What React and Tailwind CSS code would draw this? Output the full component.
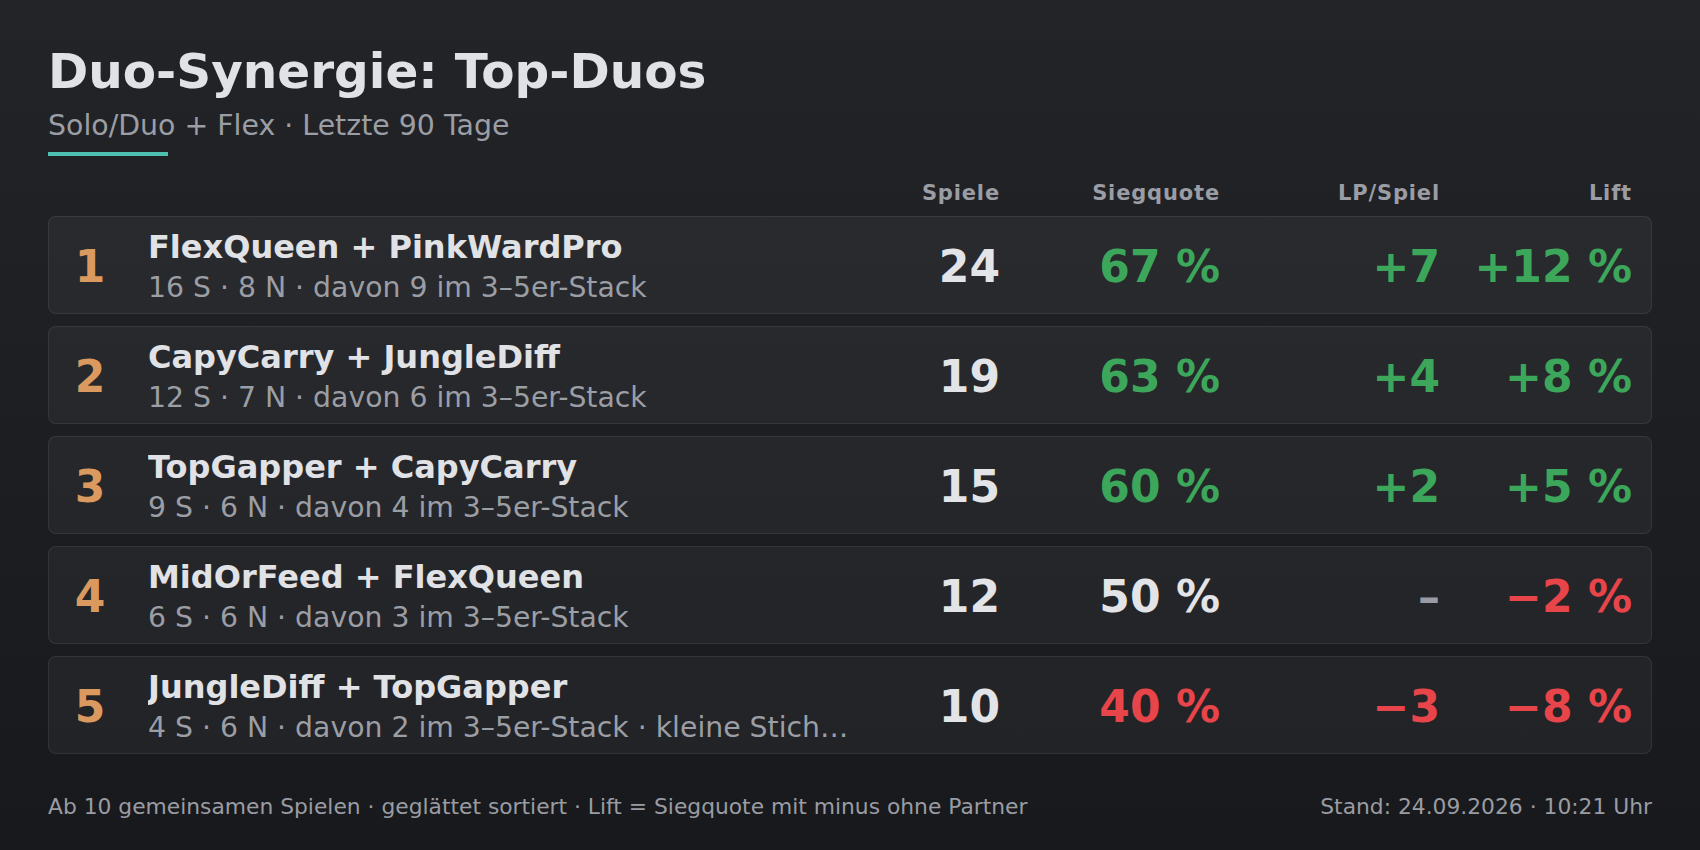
import React from 'react';

const duos = [
  { rank: 1, name: 'FlexQueen + PinkWardPro', detail: '16 S · 8 N · davon 9 im 3–5er-Stack', games: 24, rate: '67 %', rateTone: 'pos', lp: '+7', lpTone: 'pos', lift: '+12 %', liftTone: 'pos' },
  { rank: 2, name: 'CapyCarry + JungleDiff', detail: '12 S · 7 N · davon 6 im 3–5er-Stack', games: 19, rate: '63 %', rateTone: 'pos', lp: '+4', lpTone: 'pos', lift: '+8 %', liftTone: 'pos' },
  { rank: 3, name: 'TopGapper + CapyCarry', detail: '9 S · 6 N · davon 4 im 3–5er-Stack', games: 15, rate: '60 %', rateTone: 'pos', lp: '+2', lpTone: 'pos', lift: '+5 %', liftTone: 'pos' },
  { rank: 4, name: 'MidOrFeed + FlexQueen', detail: '6 S · 6 N · davon 3 im 3–5er-Stack', games: 12, rate: '50 %', rateTone: 'neutral', lp: '–', lpTone: 'muted', lift: '−2 %', liftTone: 'neg' },
  { rank: 5, name: 'JungleDiff + TopGapper', detail: '4 S · 6 N · davon 2 im 3–5er-Stack · kleine Stichprobe', games: 10, rate: '40 %', rateTone: 'neg', lp: '−3', lpTone: 'neg', lift: '−8 %', liftTone: 'neg' },
];

const toneClass = {
  pos: 'text-[#3ca75b]',
  neg: 'text-[#e8454b]',
  neutral: 'text-[#e2e4e8]',
  muted: 'text-[#9a9ca3]',
};

const cols = 'grid grid-cols-[36px_minmax(0,1fr)_120px_220px_220px_192px]';

const DuoRow = ({ duo }) => (
  <div className={`${cols} h-[98px] items-center rounded-lg border border-white/[0.07] bg-white/[0.045] pl-[23px] pr-[19px]`}>
    <div className="pt-1 text-center text-[44px] font-bold leading-none text-[#d9995f]">{duo.rank}</div>
    <div className="ml-10 min-w-0 self-start pr-6 pt-[11px]">
      <div className="truncate text-[32px] font-bold leading-[38px] text-[#e0e2e6]">{duo.name}</div>
      <div className="mt-[5px] truncate text-[28.3px] leading-[34px] text-[#9b9ea4]">{duo.detail}</div>
    </div>
    <div className="pt-1 text-right text-[44px] font-bold leading-none text-[#e2e4e8]">{duo.games}</div>
    <div className={`pt-1 text-right text-[44px] font-bold leading-none ${toneClass[duo.rateTone]}`}>{duo.rate}</div>
    <div className={`pt-1 text-right text-[44px] font-bold leading-none ${toneClass[duo.lpTone]}`}>{duo.lp}</div>
    <div className={`pt-1 text-right text-[44px] font-bold leading-none ${toneClass[duo.liftTone]}`}>{duo.lift}</div>
  </div>
);

export default function App() {
  return (
    <div className="h-[850px] w-full overflow-hidden bg-gradient-to-b from-[#232428] to-[#18191c] px-12 pt-[43px] font-['DejaVu_Sans',sans-serif]">
      <h1 className="text-[48.5px] font-bold leading-[56px] text-[#e0e2e6]">Duo-Synergie: Top-Duos</h1>
      <p className="mt-[10px] text-[28.4px] leading-[34px] text-[#9b9ea4]">Solo/Duo + Flex · Letzte 90 Tage</p>
      <div className="mt-[9px] h-1 w-[120px] bg-[#4fc1b1]" />

      <div className={`${cols} mt-[25px] h-6 items-center pl-6 pr-5 text-[21px] font-bold leading-6 tracking-[0.04em] text-[#9a9da4]`}>
        <div />
        <div />
        <div className="text-right">Spiele</div>
        <div className="text-right">Siegquote</div>
        <div className="text-right">LP/Spiel</div>
        <div className="text-right">Lift</div>
      </div>

      <div className="mt-[11px] flex flex-col gap-3">
        {duos.map((duo) => (
          <DuoRow key={duo.rank} duo={duo} />
        ))}
      </div>

      <div className="mt-10 flex items-center justify-between text-[21.8px] leading-[26px] text-[#9a9ca3]">
        <span>Ab 10 gemeinsamen Spielen · geglättet sortiert · Lift = Siegquote mit minus ohne Partner</span>
        <span>Stand: 24.09.2026 · 10:21 Uhr</span>
      </div>
    </div>
  );
}
